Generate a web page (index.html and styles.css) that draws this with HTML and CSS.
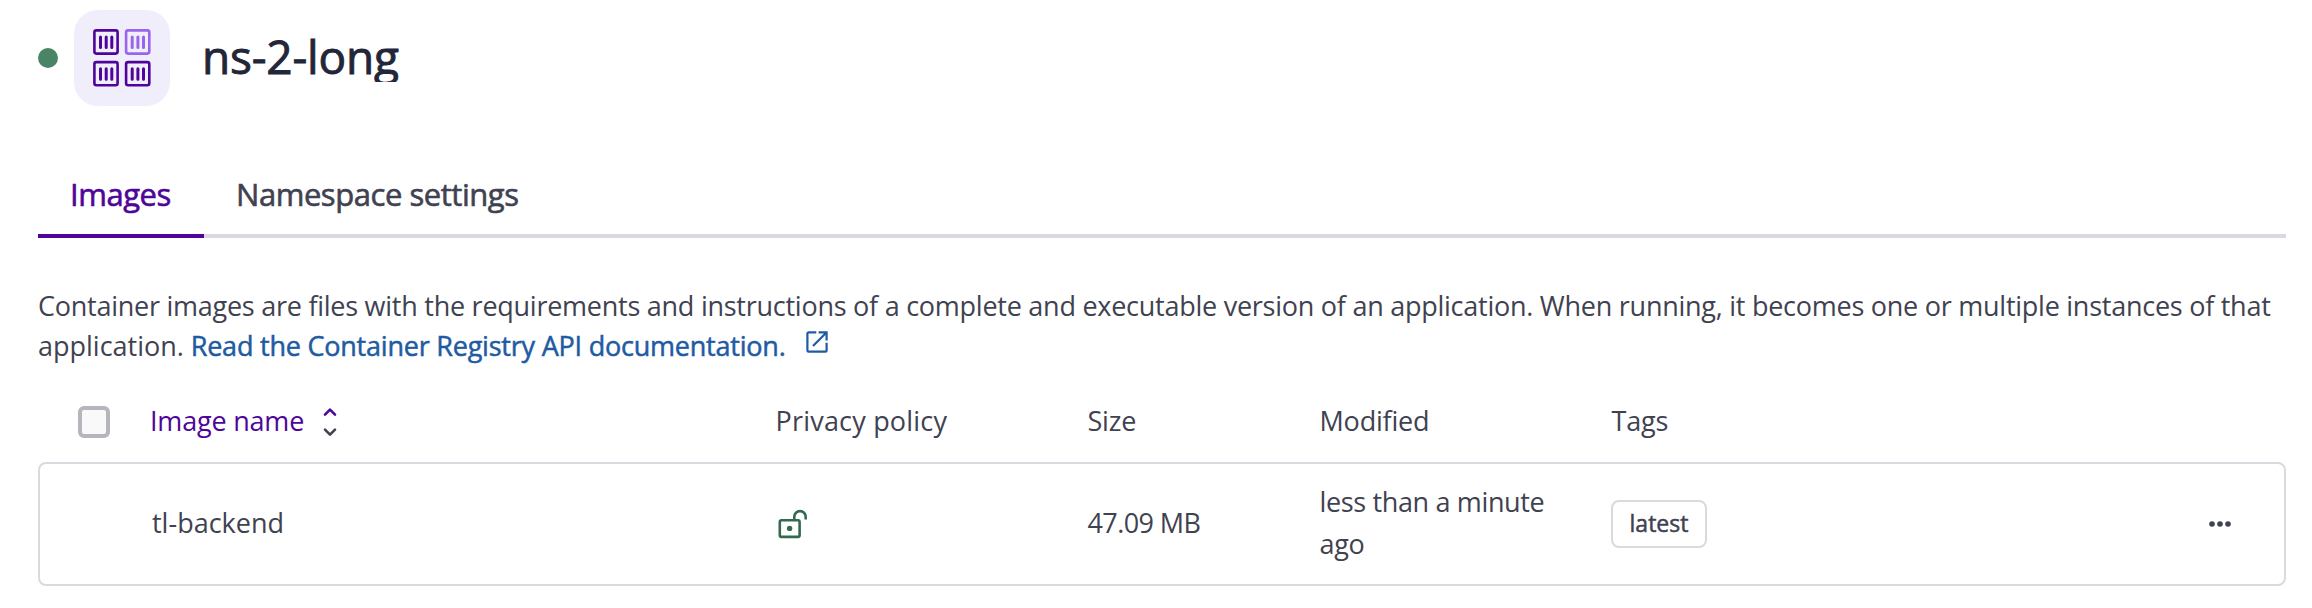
FILE: index.html
```
<!DOCTYPE html>
<html lang="en">
<head>
<meta charset="utf-8">
<title>ns-2-long</title>
<link rel="stylesheet" href="styles.css">
</head>
<body>
<header class="header">
  <span class="status"></span>
  <span class="product">
    <svg width="58" height="58" viewBox="0 0 58 58">
      <defs>
        <g id="box" fill="none" stroke="currentColor">
          <rect x="1.4" y="1.4" width="23.2" height="23.2" rx="2" stroke-width="2.6"/>
          <path d="M7.5 8v10.5M13.2 8v10.5M18.8 8v10.5" stroke-width="3" stroke-linecap="round"/>
        </g>
      </defs>
      <use href="#box" x="0" y="0"/>
      <use href="#box" x="31.7" y="0" class="box-light"/>
      <use href="#box" x="0" y="31.7"/>
      <use href="#box" x="31.7" y="31.7"/>
    </svg>
  </span>
  <h1 class="title">ns-2-long</h1>
</header>

<nav class="tabs">
  <a class="tab tab-active">Images</a>
  <a class="tab">Namespace settings</a>
</nav>

<p class="intro">Container images are files with the requirements and instructions of a complete and executable version of an application. When running, it becomes one or multiple instances of that<br><span class="intro-end">application.</span> <a class="link">Read the Container Registry API documentation.<svg class="external" width="22" height="22" viewBox="0 0 22 22" fill="none" stroke="currentColor" stroke-width="2.2"><path d="M10.3 1.4H2.6a1.2 1.2 0 0 0-1.2 1.2v16.8a1.2 1.2 0 0 0 1.2 1.2h16.8a1.2 1.2 0 0 0 1.2-1.2V11.8M12.6 1.4h8V9.6M20.2 1.8L7 15"/></svg></a></p>

<section class="table">
  <div class="row head">
    <div class="check"><span class="checkbox"></span></div>
    <div class="cell sorted"><span class="name-label">Image name</span>
      <svg width="14" height="30" viewBox="0 0 14 30" fill="none" stroke-width="2.6" stroke-linecap="round" stroke-linejoin="round"><path d="M2 7.7L7 2.7l5 5" stroke="#4f0599"/><path d="M2 22.7l5 5 5-5" stroke="#3f4250"/></svg>
    </div>
    <div class="cell privacy">Privacy policy</div>
    <div class="cell">Size</div>
    <div class="cell">Modified</div>
    <div class="cell">Tags</div>
  </div>
  <div class="row body">
    <div></div>
    <div class="cell name">tl-backend</div>
    <div class="lock">
      <svg width="30" height="30" viewBox="0 0 30 30" fill="none" stroke="#35694f" stroke-width="2.6"><rect x="1.8" y="11.3" width="19.8" height="16.6" rx="1.6"/><path d="M16.3 11V7.8a5.7 5.7 0 0 1 11.4 0V10.5"/><circle cx="11.6" cy="19.4" r="2.7" fill="#35694f" stroke="none"/></svg>
    </div>
    <div class="cell size">47.09 MB</div>
    <div class="cell modified">less than a minute ago</div>
    <div><span class="tag">latest</span></div>
    <div class="actions">
      <svg width="24" height="8" viewBox="0 0 24 8" fill="#3f4250"><circle cx="4" cy="4" r="2.8"/><circle cx="12" cy="4" r="2.8"/><circle cx="20" cy="4" r="2.8"/></svg>
    </div>
  </div>
</section>
</body>
</html>
```
FILE: styles.css
```
* { box-sizing: border-box; }
body {
  margin: 0;
  padding: 10px 26px 0 38px;
  background: #fff;
  color: #3f4250;
  font-family: "Open Sans", sans-serif;
  font-size: 27px;
  line-height: 42px;
}
svg { display: block; }

.header { display: flex; align-items: center; height: 96px; }
.status { width: 20px; height: 20px; border-radius: 50%; background: #498467; }
.product {
  display: flex; align-items: center; justify-content: center;
  width: 96px; height: 96px; margin-left: 16px;
  border-radius: 24px; background: #f1eefc; color: #4f0599;
}
.box-light { color: #9965ef; }
.title {
  margin: 0 0 4px 32px;
  height: 52px; line-height: 52px; overflow: hidden;
  font-size: 46px; font-weight: 400; letter-spacing: -0.2px;
  color: #222638; -webkit-text-stroke: 0.9px #222638;
}

.tabs { display: flex; height: 88px; margin-top: 44px; border-bottom: 4px solid #d9d9df; }
.tab {
  height: 88px; padding: 28px 32px 0;
  font-size: 31px; line-height: 32px; letter-spacing: -0.45px;
  -webkit-text-stroke: 0.6px currentColor;
}
.tab-active { width: 166px; color: #4f0599; border-bottom: 4px solid #4f0599; }

.intro { margin: 48px 0 0; line-height: 40px; letter-spacing: -0.255px; white-space: nowrap; }
.intro-end { letter-spacing: 0; }
.link { color: #1f5ba3; letter-spacing: -0.22px; -webkit-text-stroke: 0.5px currentColor; }
.external { display: inline-block; margin-left: 20px; vertical-align: 3px; }

.table { margin-top: 16px; }
.row { display: grid; grid-template-columns: 112px 625.5px 312px 232px 292px 1fr 80px; align-items: center; }
.head { height: 80px; }
.body {
  height: 124px; border: 2px solid #d9d9df; border-radius: 8px;
  grid-template-columns: 110px 625.5px 312px 232px 291.5px 1fr 76px;
}
.cell { padding-bottom: 3px; letter-spacing: -0.2px; }
.check { padding-left: 40px; }
.checkbox { display: block; width: 32px; height: 32px; border: 4px solid #b5b5bd; border-radius: 6px; background: #f9f9fa; }
.sorted { display: flex; align-items: center; gap: 19px; padding: 0; color: #4f0599; }
.name-label { padding-bottom: 3px; }
.privacy { letter-spacing: 0.2px; }
.name { padding-left: 2px; letter-spacing: 0; }
.lock { padding-left: 2.5px; }
.size { letter-spacing: -0.6px; }
.modified { padding-right: 50px; letter-spacing: -0.35px; }
.tag {
  display: block; width: 96px; height: 48px;
  border: 2px solid #d9d9df; border-radius: 8px;
  text-align: center; font-size: 23px; line-height: 42px;
  -webkit-text-stroke: 0.5px currentColor;
}
```
